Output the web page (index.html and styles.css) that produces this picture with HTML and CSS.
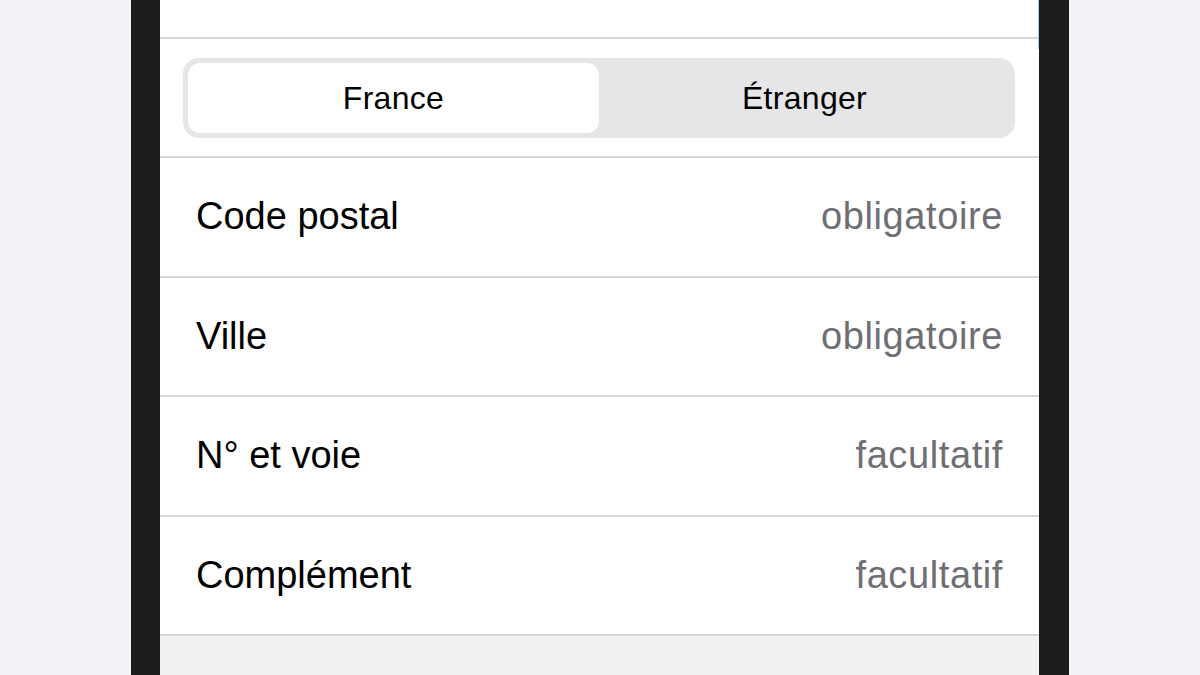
FILE: index.html
```html
<!DOCTYPE html>
<html lang="fr">
<head>
<meta charset="utf-8">
<link rel="stylesheet" href="styles.css">
</head>
<body>
<div class="frame">
  <div class="screen">
    <div class="scroll-hint"></div>
    <div class="top"></div>
    <div class="seg-section">
      <div class="segmented">
        <div class="seg seg-active">France</div>
        <div class="seg">Étranger</div>
      </div>
    </div>
    <div class="row"><span class="label">Code postal</span><span class="hint">obligatoire</span></div>
    <div class="row"><span class="label">Ville</span><span class="hint">obligatoire</span></div>
    <div class="row"><span class="label">N° et voie</span><span class="hint">facultatif</span></div>
    <div class="row"><span class="label">Complément</span><span class="hint">facultatif</span></div>
    <div class="footer"></div>
  </div>
</div>
</body>
</html>
```
FILE: styles.css
```css
html, body {
  margin: 0;
  padding: 0;
  height: 100%;
}
body {
  background: #f2f3f8;
  font-family: "Liberation Sans", Arial, sans-serif;
  overflow: hidden;
}
.frame {
  margin-left: 131px;
  width: 879px;
  height: 675px;
  background: #1c1c1c;
  padding: 0 30px 0 29px;
  display: flex;
}
.screen {
  position: relative;
  width: 879px;
  height: 675px;
  background: #ffffff;
  display: flex;
  flex-direction: column;
}
.scroll-hint {
  position: absolute;
  right: 0;
  top: 0;
  width: 1px;
  height: 49px;
  background: #9fd3ea;
}
.top {
  height: 37px;
  flex: none;
  border-bottom: 2px solid #d6d6d8;
}
.seg-section {
  flex: none;
  padding: 19px 24px 18px 23px;
  border-bottom: 2px solid #d6d6d8;
}
.segmented {
  height: 80px;
  box-sizing: border-box;
  background: #e6e6e9;
  border-radius: 16px;
  padding: 5px;
  display: flex;
}
.seg {
  flex: 1;
  display: flex;
  align-items: center;
  justify-content: center;
  font-size: 32px;
  letter-spacing: 0.3px;
  color: #000;
  border-radius: 12px;
}
.seg-active {
  background: #ffffff;
}
.row {
  flex: none;
  height: 117.5px;
  border-bottom: 2px solid #d6d6d8;
  display: flex;
  align-items: center;
  justify-content: space-between;
  padding: 0 36px;
  font-size: 38px;
}
.label {
  color: #000;
}
.hint {
  color: #6e6e73;
  letter-spacing: 0.6px;
}
.footer {
  flex: 1;
  background: #f1f1f1;
}
```
